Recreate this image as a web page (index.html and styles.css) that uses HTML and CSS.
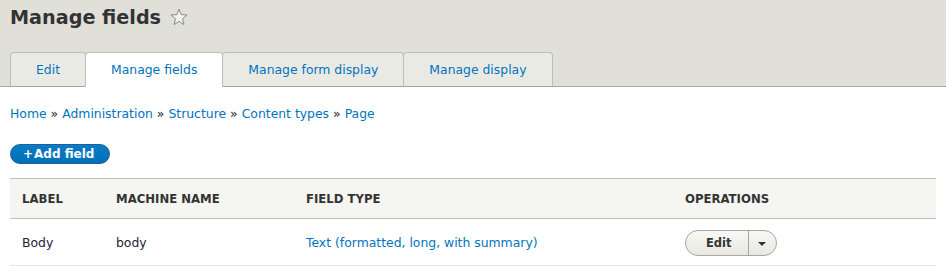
FILE: index.html
```html
<!DOCTYPE html>
<html lang="en">
<head>
<meta charset="utf-8">
<title>Manage fields</title>
<link rel="stylesheet" href="styles.css">
</head>
<body>
<header class="content-header">
  <div class="title-row">
    <h1 class="page-title">Manage fields</h1>
    <svg class="shortcut-star" width="18" height="18" viewBox="0 0 18 18" aria-hidden="true">
      <polygon points="9,1.2 11.2,6.6 17,7 12.5,10.7 14,16.6 9,13.4 4,16.6 5.5,10.7 1,7 6.8,6.6" fill="#f2f2ee" stroke="#8c8c86" stroke-width="1" stroke-linejoin="round"/>
    </svg>
  </div>
  <ul class="tabs">
    <li class="tab"><a href="#">Edit</a></li>
    <li class="tab is-active"><a href="#">Manage fields</a></li>
    <li class="tab"><a href="#">Manage form display</a></li>
    <li class="tab"><a href="#">Manage display</a></li>
  </ul>
</header>
<main class="page">
  <nav class="breadcrumb">
    <a href="#">Home</a><span class="sep">»</span><a href="#">Administration</a><span class="sep">»</span><a href="#">Structure</a><span class="sep">»</span><a href="#">Content types</a><span class="sep">»</span><a href="#">Page</a>
  </nav>
  <div class="actions">
    <a href="#" class="button-primary"><span class="plus">+</span>Add field</a>
  </div>
  <table class="field-table">
    <colgroup>
      <col class="col-label">
      <col class="col-machine">
      <col class="col-type">
      <col class="col-ops">
    </colgroup>
    <thead>
      <tr><th>Label</th><th>Machine name</th><th>Field type</th><th>Operations</th></tr>
    </thead>
    <tbody>
      <tr>
        <td>Body</td>
        <td>body</td>
        <td><a href="#">Text (formatted, long, with summary)</a></td>
        <td>
          <div class="dropbutton">
            <a href="#" class="dropbutton-main">Edit</a>
            <span class="dropbutton-toggle"><span class="arrow"></span></span>
          </div>
        </td>
      </tr>
    </tbody>
  </table>
</main>
</body>
</html>
```
FILE: styles.css
```css
html, body {
  margin: 0;
  padding: 0;
}
body {
  font-family: "DejaVu Sans", "Noto Sans", sans-serif;
  font-size: 12.4px;
  line-height: 20px;
  color: #222330;
  background: #fff;
}
a {
  color: #0074bd;
  text-decoration: none;
}
.content-header {
  background: #e0e0d8;
  padding: 0 10px;
  border-bottom: 1px solid #a6a6a6;
}
.title-row {
  display: flex;
  align-items: flex-start;
  padding-top: 6px;
  height: 46px;
}
.page-title {
  margin: 0;
  font-size: 19.2px;
  line-height: 24px;
  font-weight: bold;
  color: #333;
}
.shortcut-star {
  margin-left: 9px;
  margin-top: 2px;
}
.tabs {
  display: flex;
  list-style: none;
  margin: 0;
  padding: 0;
  height: 34px;
}
.tab {
  margin-right: -1px;
  border: 1px solid #bebeb8;
  border-bottom: none;
  border-radius: 4px 4px 0 0;
  background: #eaeae5;
  height: 33px;
}
.tab a {
  display: block;
  padding: 7px 25px 6px;
  line-height: 20px;
}
.tab.is-active {
  background: #fff;
  height: 34px;
  margin-bottom: -1px;
  position: relative;
  z-index: 1;
}
.page {
  padding: 0 10px;
}
.breadcrumb {
  margin-top: 17px;
  line-height: 20px;
}
.breadcrumb .sep {
  margin: 0 4px;
  color: #222330;
}
.actions {
  margin-top: 20px;
  display: flex;
}
.button-primary {
  display: inline-block;
  box-sizing: border-box;
  height: 20px;
  line-height: 18px;
  padding: 0 15px 0 12px;
  font-size: 12px;
  font-weight: bold;
  color: #fff;
  background: linear-gradient(#0a7bc5, #0070b6);
  border: 1px solid #1e5f95;
  border-radius: 20px;
}
.plus {
  margin-right: 1px;
}
.field-table {
  margin-top: 14px;
  width: 100%;
  border-collapse: collapse;
  border-top: 1px solid #bfbfba;
}
.col-label { width: 94px; }
.col-machine { width: 190px; }
.col-type { width: 379px; }
th {
  background: #f5f5f2;
  border-bottom: 1px solid #bfbfba;
  padding: 10px 12px 9px;
  text-align: left;
  text-transform: uppercase;
  font-size: 11.7px;
  font-weight: bold;
  line-height: 20px;
  color: #333;
}
td {
  padding: 11px 12px 9px;
  border-bottom: 1px solid #e6e4df;
  line-height: 20px;
  vertical-align: middle;
}
.dropbutton {
  display: flex;
  width: fit-content;
  box-sizing: border-box;
  height: 26px;
  border: 1px solid #a6a6a6;
  border-radius: 20px;
  background: linear-gradient(#f7f7f4, #e9e9e2);
  overflow: hidden;
}
.dropbutton-main {
  display: block;
  width: 63px;
  box-sizing: border-box;
  padding-left: 20px;
  line-height: 24px;
  font-size: 11.5px;
  font-weight: bold;
  color: #333;
  border-right: 1px solid #a6a6a6;
}
.dropbutton-toggle {
  display: flex;
  align-items: center;
  justify-content: center;
  width: 27px;
}
.arrow {
  width: 0;
  height: 0;
  border-left: 4px solid transparent;
  border-right: 4px solid transparent;
  border-top: 4px solid #333;
  margin-left: -2px;
  margin-top: 1px;
}
```
